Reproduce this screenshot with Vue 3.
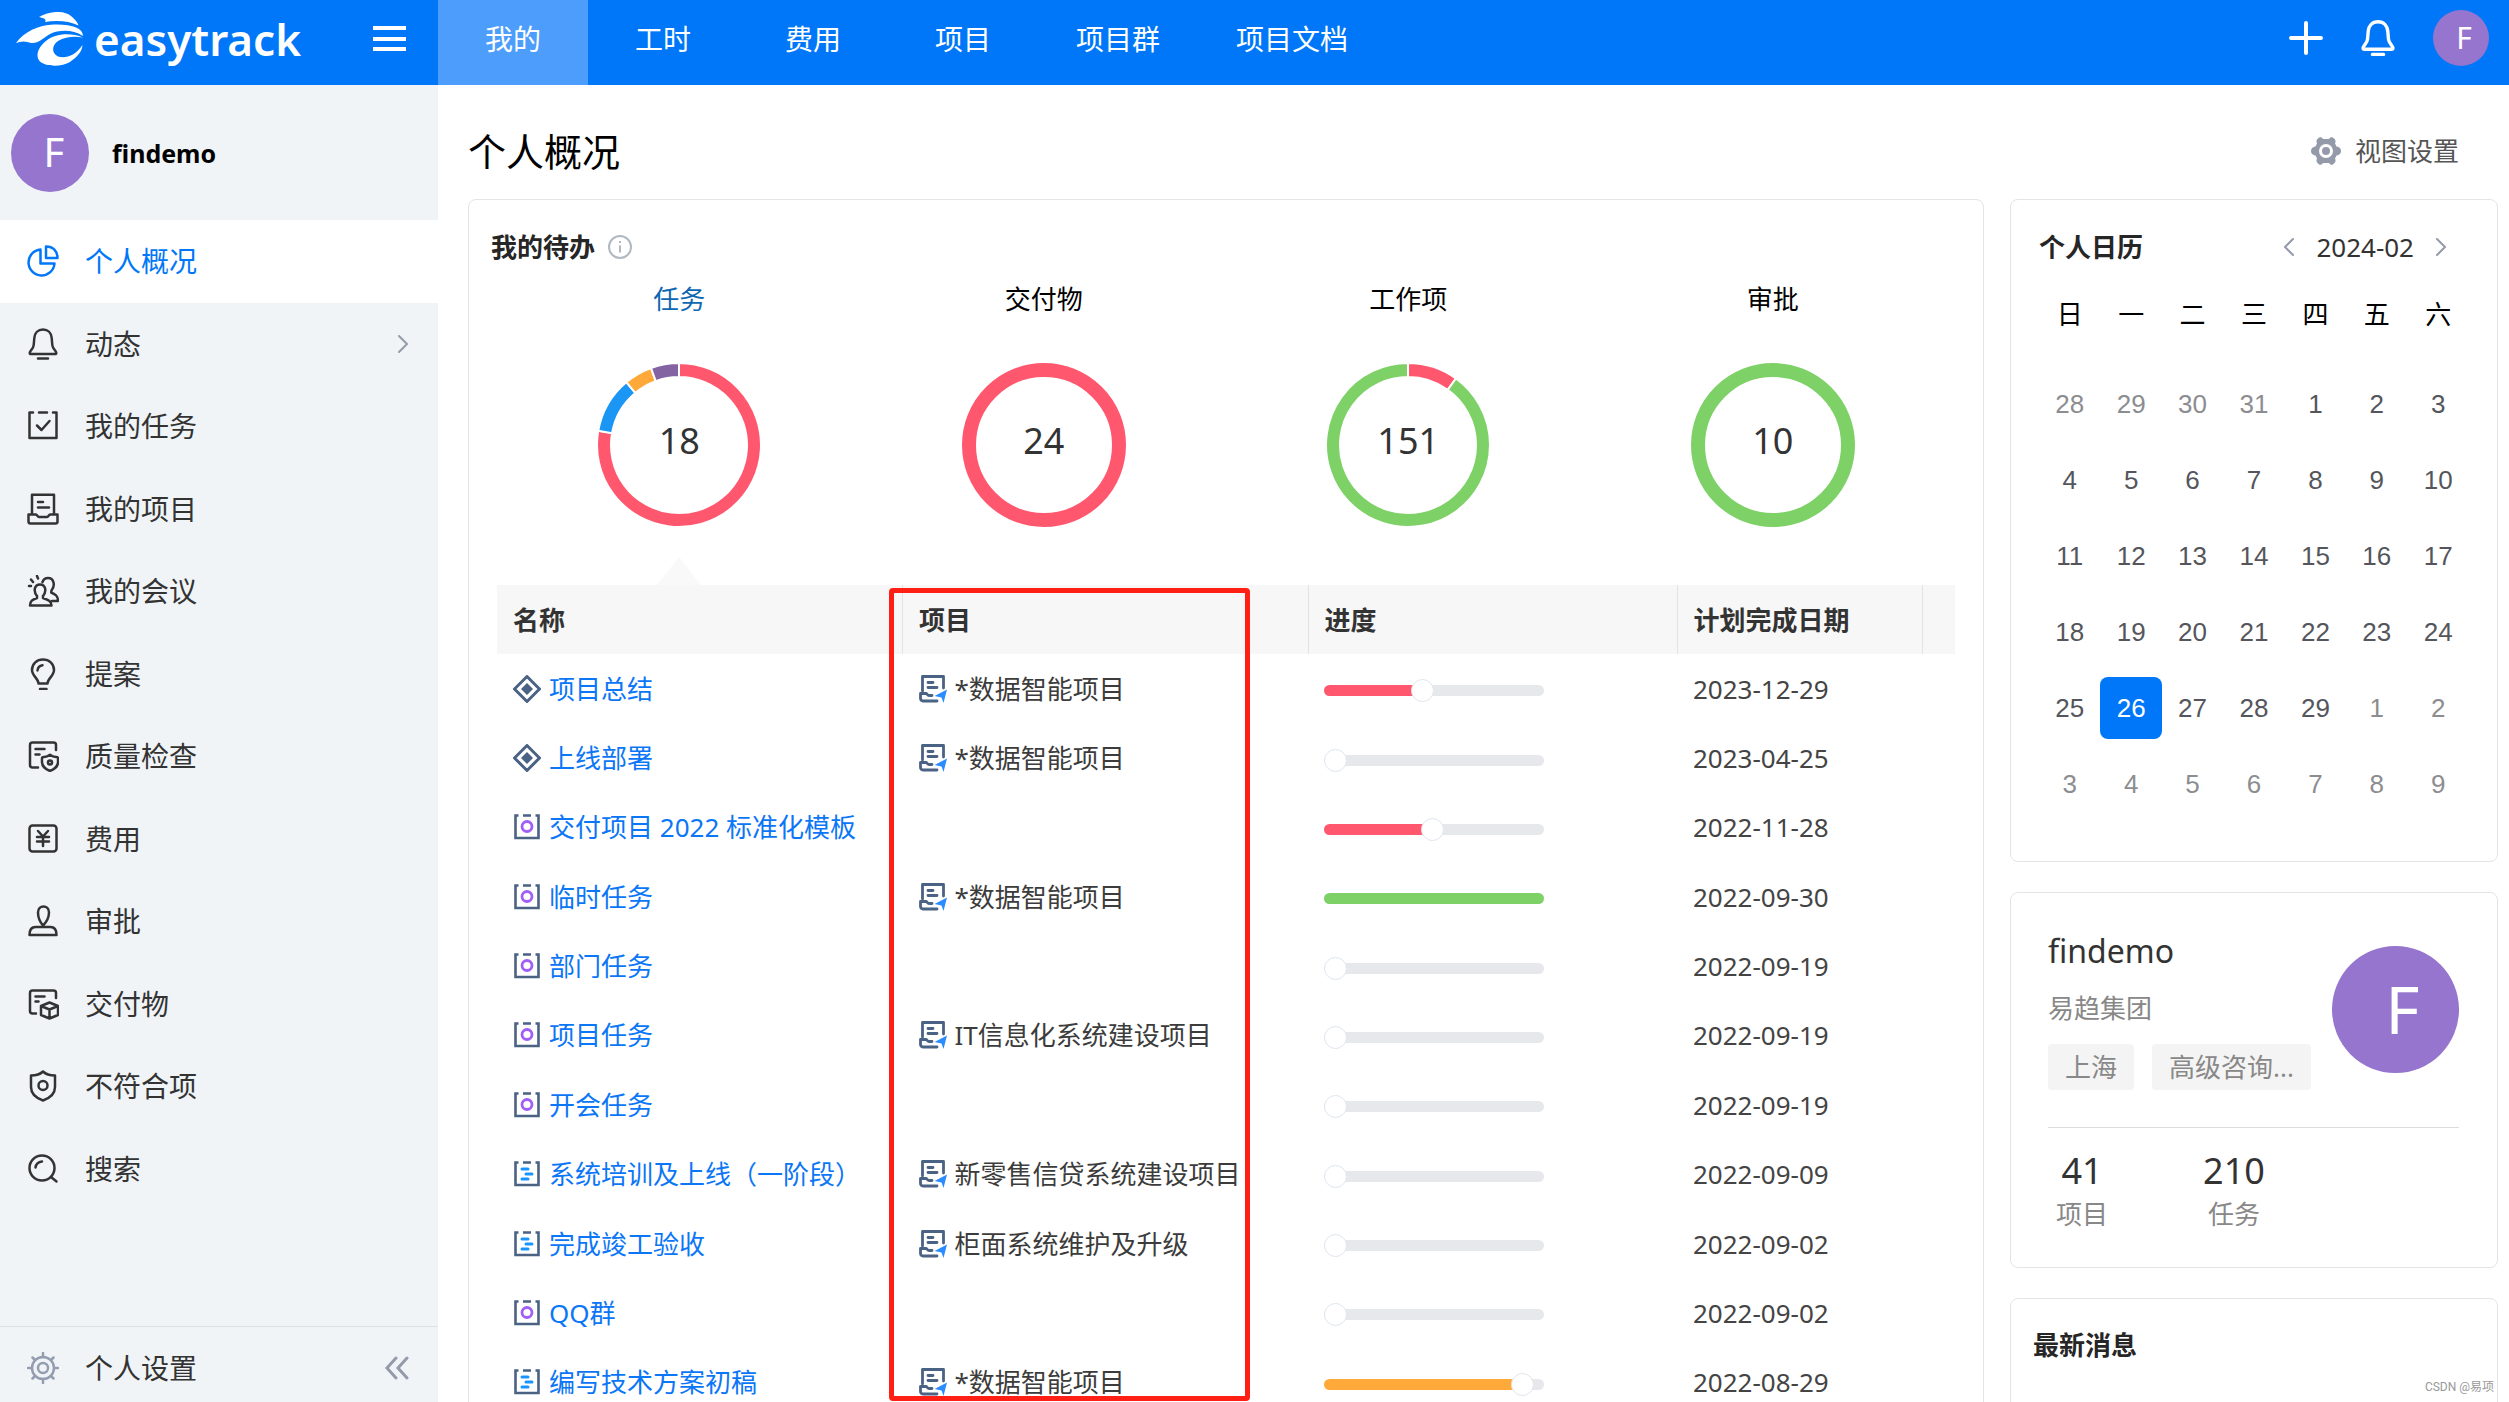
<script setup>
import { ref } from 'vue'

const tabs = ['我的', '工时', '费用', '项目', '项目群', '项目文档']

const menu = [
  { icon: 'pie', label: '个人概况', active: true },
  { icon: 'bell', label: '动态', more: true },
  { icon: 'task', label: '我的任务' },
  { icon: 'project', label: '我的项目' },
  { icon: 'meeting', label: '我的会议' },
  { icon: 'bulb', label: '提案' },
  { icon: 'quality', label: '质量检查' },
  { icon: 'yen', label: '费用' },
  { icon: 'stamp', label: '审批' },
  { icon: 'deliver', label: '交付物' },
  { icon: 'shield', label: '不符合项' },
  { icon: 'search', label: '搜索' },
]

const RED = '#ff586e'
const GREEN = '#7dd167'
const charts = [
  { label: '任务', total: 18, active: true, parts: [[14, RED], [2, '#1c96f5'], [1, '#ffa93a'], [1, '#8463a3']] },
  { label: '交付物', total: 24, parts: [[24, RED]] },
  { label: '工作项', total: 151, parts: [[15, RED], [136, GREEN]] },
  { label: '审批', total: 10, parts: [[10, GREEN]] },
]

function point(r, share) {
  const a = share * 2 * Math.PI
  return `${(82 + r * Math.sin(a)).toFixed(2)} ${(82 - r * Math.cos(a)).toFixed(2)}`
}
function slices(chart) {
  let from = 0
  return chart.parts.map(([n, color]) => {
    const to = from + n / chart.total
    const big = to - from > 0.5 ? 1 : 0
    const d = `M${point(82, from)}A82 82 0 ${big} 1 ${point(82, to)}L${point(68, to)}A68 68 0 ${big} 0 ${point(68, from)}Z`
    from = to
    return { d, color }
  })
}

const rows = ref([
  { icon: 'milestone', name: '项目总结', project: '*数据智能项目', value: 44, color: RED, date: '2023-12-29' },
  { icon: 'milestone', name: '上线部署', project: '*数据智能项目', value: 0, color: RED, date: '2023-04-25' },
  { icon: 'adhoc', name: '交付项目 2022 标准化模板', project: '', value: 49, color: RED, date: '2022-11-28' },
  { icon: 'adhoc', name: '临时任务', project: '*数据智能项目', value: 100, color: GREEN, date: '2022-09-30' },
  { icon: 'adhoc', name: '部门任务', project: '', value: 0, color: RED, date: '2022-09-19' },
  { icon: 'adhoc', name: '项目任务', project: 'IT信息化系统建设项目', value: 0, color: RED, date: '2022-09-19' },
  { icon: 'adhoc', name: '开会任务', project: '', value: 0, color: RED, date: '2022-09-19' },
  { icon: 'plan', name: '系统培训及上线（一阶段）', project: '新零售信贷系统建设项目', value: 0, color: RED, date: '2022-09-09' },
  { icon: 'plan', name: '完成竣工验收', project: '柜面系统维护及升级', value: 0, color: RED, date: '2022-09-02' },
  { icon: 'adhoc', name: 'QQ群', project: '', value: 0, color: RED, date: '2022-09-02' },
  { icon: 'plan', name: '编写技术方案初稿', project: '*数据智能项目', value: 95, color: '#ffa93a', date: '2022-08-29' },
])

const weekdays = ['日', '一', '二', '三', '四', '五', '六']
const first = new Date(2024, 0, 28)
const weeks = Array.from({ length: 6 }, (_, w) =>
  Array.from({ length: 7 }, (_, d) => {
    const day = new Date(first.getFullYear(), first.getMonth(), first.getDate() + w * 7 + d)
    const inMonth = day.getMonth() === 1
    return { n: day.getDate(), muted: !inMonth, today: inMonth && day.getDate() === 26 }
  })
)
</script>

<template>
  <div class="app">
    <svg class="sprite" aria-hidden="true">
      <symbol id="i-pie" viewBox="0 0 32 32"><path d="M13.500 4.500V18.500H27.500A13 13 0 1 1 13.500 4.500Z" /><path d="M19 1.500V13H30.500C30.500 6 26 1.500 19 1.500Z" /></symbol>
      <symbol id="i-bell" viewBox="0 0 32 32"><path d="M16 1.500c-5 0-8.300 3.500-8.700 8.500l-.6 7c-.3 3.500-3 5-3.900 7.500-.3 1 .1 1.500 1.200 1.500h24c1.100 0 1.500-.5 1.200-1.500-.9-2.500-3.600-4-3.900-7.500l-.6-7c-.4-5-3.700-8.500-8.700-8.500ZM11 30.600h10" /></symbol>
      <symbol id="i-task" viewBox="0 0 32 32"><path d="M6 2.500H2.500V28H29.500V2.500H26M12 2.500h8M10 15.500l4.500 4.500 8-9" /></symbol>
      <symbol id="i-project" viewBox="0 0 32 32"><path d="M5 20V1.800h22V20M11 9h5M11 14.500h11M1.500 21.500h7.500c1 0 1.500 2.500 3 2.500h8c1.500 0 2-2.500 3-2.500h7.500v7c0 1-.8 2-2 2h-25c-1.200 0-2-1-2-2Z" /></symbol>
      <symbol id="i-meeting" viewBox="0 0 32 32"><path d="M3 30.500c0-4.500 2.500-6 7-7.500v-2c-4-5-2.500-11.500 3-11.500s7 6.500 3 11.500v2c6 2 8.500 3.500 8.500 7.500ZM15.500 7c1-3 3-4 5.500-4 6 0 7.500 7.500 3.500 12.500l-.3 2c5 2 6.800 4 6.800 8.500h-6M2 11h2M4 4.500 6 7M10 1l1 2.500" /></symbol>
      <symbol id="i-bulb" viewBox="0 0 32 32"><path d="M11.500 25.500c0-5-6.500-7.500-6.500-13.500C5 5.500 10 1.500 16 1.500s11 4 11 10.500c0 6-6.500 8.500-6.500 13.500ZM13 31h6.500M10.500 12.500c.3-3 2-4.800 5-5.300" /></symbol>
      <symbol id="i-quality" viewBox="0 0 32 32"><path d="M29 10V5c0-1.500-1-2.500-2.500-2.500h-21C4 2.500 3 3.500 3 5v20c0 1.500 1 2.500 2.500 2.500H11M8.500 9h9M8.500 14.500h4M17 17c2.500 0 4.500-1 6-2.200 1.500 1.200 3.500 2.200 6 2.200 2.500 0 2 1 2 5 0 5-3.500 7-8 9-4.500-2-8-4-8-9 0-4-.5-5 2-5Z" /><circle cx="23" cy="22.500" r="2" /></symbol>
      <symbol id="i-yen" viewBox="0 0 32 32"><rect x="2.500" y="2.500" width="27" height="26" rx="3" /><path d="M11 8l5 5.500L21 8M16 13.500V23M10 14h12M10 18.500h12" /></symbol>
      <symbol id="i-stamp" viewBox="0 0 32 32"><path d="M16 20.500C13 17 11 12 11 7.500c0-8 11-8 11 0 0 4.500-2.500 9.500-6 13ZM2.500 30h27c0-5-1.500-8-6-8h-15c-4.500 0-6 3-6 8Z" /></symbol>
      <symbol id="i-deliver" viewBox="0 0 32 32"><path d="M29 10V5c0-1.500-1-2.500-2.500-2.500h-21C4 2.500 3 3.500 3 5v18c0 1.500 1 2.500 2.500 2.500H9M8.500 8.500h9M8.500 13.500h3M14 18l8.500-3.500L31 18v9l-8.500 3.500L14 27ZM14 18l8.500 3.500L31 18M22.500 21.500v9" /></symbol>
      <symbol id="i-shield" viewBox="0 0 32 32"><path d="M4 5.500c5 0 9-1 12-4 3 3 7 4 12 4V17c0 7-5 11-12 13.500C9 28 4 24 4 17Z" /><circle cx="16" cy="15.500" r="4.500" /></symbol>
      <symbol id="i-search" viewBox="0 0 32 32"><circle cx="15" cy="15" r="12.500" /><path d="M24 24l5.500 4.500M8.500 14.500c.5-3.500 2.500-5.500 6.500-6" /></symbol>
      <symbol id="i-cog" viewBox="0 0 32 32"><circle cx="16" cy="16" r="11" /><circle cx="16" cy="16" r="5" /><path d="M16 1v4M16 27v4M1 16h4M27 16h4M5.500 5.500l2.500 2.500M24 24l2.500 2.500M26.500 5.500 24 8M8 24l-2.500 2.500" /></symbol>
      <symbol id="i-milestone" viewBox="0 0 28 28"><path d="M14 1.500 26.500 14 14 26.500 1.500 14Z" fill="none" stroke="#4a6283" stroke-width="3" stroke-linejoin="round" /><path d="M14 8l6 6-6 6-6-6Z" fill="#4a6283" /></symbol>
      <symbol id="i-adhoc" viewBox="0 0 28 28"><path d="M5.500 2.500H2.500V25H25.500V2.500H22.500M10 2.500h8" fill="none" stroke="#4a6283" stroke-width="2.600" /><circle cx="14" cy="13.500" r="5" fill="none" stroke="#a060f5" stroke-width="2.800" /></symbol>
      <symbol id="i-plan" viewBox="0 0 28 28"><path d="M5.500 2.500H2.500V25H25.500V2.500H22.500M10 2.500h8" fill="none" stroke="#4a6283" stroke-width="2.600" /><path d="M9 9h6M13 14h6M9 19h6" fill="none" stroke="#1a95ff" stroke-width="3" stroke-linecap="round" /></symbol>
      <symbol id="i-doc" viewBox="0 0 28 28"><path d="M3.500 16V1.500h21V13M9 7.500h5M9 12.500h9M18 26H4c-1.500 0-2.500-1-2.500-2.500V18.500H7c1 0 1.500 2 3 2h3" fill="none" stroke="#4a6283" stroke-width="2.800" stroke-linecap="round" stroke-linejoin="round" /><path d="M28 14.500 15.500 21l7 1.500L24.500 28Z" fill="#2b8cff" /></symbol>
    </svg>

    <header class="topbar">
      <div class="brand">
        <a class="logo" href="#">
          <svg class="logo-mark" viewBox="0 0 68 54" aria-hidden="true">
            <path d="M23 5C33-1 48-2 55 4c4 3 7 7 7.500 9.500C53 9 41 8 29 10c2-3-2-4-6-5Z" />
            <path d="M0 31C8 20 22 13 38 12.500 56 12 67 16 67 24 56 17 43 18 34 22 27 26 22 32 15 31 10 29 5 29 0 31Z" />
            <path d="M67 25.500C54 20 38 22 30 29 20 37 20 46 24 49.500 30 55 46 55 54 50 61 45 66 40 66.500 33 60 43 50 47 42 44.500 35 41 36 33 42 29 50 24 60 24 67 25.500Z" />
          </svg>
          <span>easytrack</span>
        </a>
        <button class="burger" aria-label="菜单"><i></i><i></i><i></i></button>
      </div>
      <nav class="tabs">
        <a v-for="(t, i) in tabs" :key="t" href="#" :class="{ active: i === 0 }">{{ t }}</a>
      </nav>
      <div class="tools">
        <button aria-label="新建"><svg class="plus" viewBox="0 0 34 34"><path d="M17 2v30M2 17h30" /></svg></button>
        <button aria-label="通知"><svg class="alarm"><use href="#i-bell" /></svg></button>
        <button class="avatar small">F</button>
      </div>
    </header>

    <div class="body">
      <aside class="sidebar">
        <div class="user"><span class="avatar medium">F</span><strong>findemo</strong></div>
        <nav class="menu">
          <a v-for="m in menu" :key="m.label" href="#" :class="{ active: m.active }">
            <svg class="ico"><use :href="'#i-' + m.icon" /></svg>
            <span>{{ m.label }}</span>
            <svg v-if="m.more" class="chev" viewBox="0 0 12 20"><path d="M2 2l8 8-8 8" /></svg>
          </a>
        </nav>
        <div class="foot">
          <a href="#"><svg class="ico grey"><use href="#i-cog" /></svg><span>个人设置</span></a>
          <button aria-label="收起"><svg class="collapse" viewBox="0 0 24 24"><path d="M11 2 2 12l9 10M22 2l-9 10 9 10" /></svg></button>
        </div>
      </aside>

      <main class="main">
        <div class="head">
          <h1>个人概况</h1>
          <button class="view">
            <svg class="gear" viewBox="0 0 30 28"><path d="M7 1.500c1.500-2 4-1.500 5 .5h6c1-2 3.500-2.500 5-.5 1.500 1 2 3 1 5l1.500 3c3 .3 4.500 2 4.500 4.500s-1.500 4.200-4.500 4.500l-1.500 3c1 2 .5 4-1 5-1.500 2-4 1.500-5-.5h-6c-1 2-3.500 2.500-5 .5-1.500-1-2-3-1-5l-1.500-3C1.500 18.200 0 16.500 0 14s1.500-4.200 4.500-4.500l1.500-3c-1-2-.5-4 1-5Z" /><circle cx="15" cy="14" r="5.500" /></svg>
            <span>视图设置</span>
          </button>
        </div>

        <div class="columns">
          <section class="card todo">
            <h2>我的待办
              <svg class="info" viewBox="0 0 24 24"><circle cx="12" cy="12" r="11" /><path d="M12 10.500v7M12 6v2" /></svg>
            </h2>
            <div class="charts">
              <a v-for="c in charts" :key="c.label" href="#" class="chart" :class="{ active: c.active }">
                <span class="chart-label">{{ c.label }}</span>
                <span class="donut">
                  <svg viewBox="0 0 164 164">
                    <circle v-if="c.parts.length === 1" cx="82" cy="82" r="75" fill="none" :stroke="c.parts[0][1]" stroke-width="14" />
                    <template v-else>
                      <path v-for="s in slices(c)" :key="s.d" :d="s.d" :fill="s.color" stroke="#fff" stroke-width="2" />
                    </template>
                  </svg>
                  <b>{{ c.total }}</b>
                </span>
              </a>
            </div>

            <div class="grid-wrap">
              <table class="tasks">
                <colgroup><col /><col /><col class="c-progress" /><col class="c-date" /><col class="c-end" /></colgroup>
                <thead>
                  <tr><th>名称</th><th>项目</th><th>进度</th><th>计划完成日期</th><th></th></tr>
                </thead>
                <tbody>
                  <tr v-for="r in rows" :key="r.name">
                    <td><a href="#" class="cell link"><svg><use :href="'#i-' + r.icon" /></svg><span>{{ r.name }}</span></a></td>
                    <td><span v-if="r.project" class="cell"><svg><use href="#i-doc" /></svg><span>{{ r.project }}</span></span></td>
                    <td>
                      <input
                        v-model="r.value" type="range" min="0" max="100" :aria-label="r.name + ' 进度'"
                        :class="{ done: r.value >= 100 }"
                        :style="{ '--fill': r.value + '%', '--tone': r.color }"
                      />
                    </td>
                    <td class="date">{{ r.date }}</td>
                    <td></td>
                  </tr>
                </tbody>
              </table>
              <div class="marker"></div>
            </div>
          </section>

          <div class="side">
            <section class="card calendar">
              <div class="cal-head">
                <h2>个人日历</h2>
                <div class="month">
                  <button aria-label="上个月"><svg class="chev" viewBox="0 0 12 20"><path d="M10 2l-8 8 8 8" /></svg></button>
                  <span>2024-02</span>
                  <button aria-label="下个月"><svg class="chev" viewBox="0 0 12 20"><path d="M2 2l8 8-8 8" /></svg></button>
                </div>
              </div>
              <table>
                <thead><tr><th v-for="d in weekdays" :key="d">{{ d }}</th></tr></thead>
                <tbody>
                  <tr v-for="(w, i) in weeks" :key="i">
                    <td v-for="(d, j) in w" :key="j"><span :class="{ muted: d.muted, today: d.today }">{{ d.n }}</span></td>
                  </tr>
                </tbody>
              </table>
            </section>

            <section class="card profile">
              <div class="who">
                <div>
                  <div class="name">findemo</div>
                  <div class="org">易趋集团</div>
                  <div class="chips"><span>上海</span><span>高级咨询...</span></div>
                </div>
                <span class="avatar large">F</span>
              </div>
              <div class="stats">
                <div><b>41</b><span>项目</span></div>
                <div><b>210</b><span>任务</span></div>
              </div>
            </section>

            <section class="card news"><h2>最新消息</h2></section>
          </div>
        </div>
      </main>
    </div>
    <div class="watermark">CSDN @易项</div>
  </div>
</template>

<style>
body { margin: 0; overflow: hidden; }
</style>

<style scoped>
.app {
  position: relative;
  display: flex;
  flex-direction: column;
  height: 100vh;
  overflow: hidden;
  background: #fff;
  color: #333;
  font: 26px/36px "Noto Sans", "Noto Sans CJK SC", sans-serif;
}
.app * { box-sizing: border-box; }
.sprite { position: absolute; width: 0; height: 0; }
a { color: inherit; text-decoration: none; }
button { display: flex; align-items: center; justify-content: center; padding: 0; border: 0; background: none; color: inherit; font: inherit; }
h1, h2 { margin: 0; }
h2 { font-size: 26px; line-height: 36px; font-weight: 700; color: #262626; }

.topbar { display: flex; flex: none; height: 85px; background: #0077f8; color: #fff; }
.brand { display: flex; align-items: center; justify-content: space-between; width: 438px; padding: 0 32px 8px 16px; }
.logo { display: flex; align-items: center; gap: 10px; font-size: 44px; line-height: 60px; font-weight: 600; }
.logo-mark { width: 68px; height: 54px; fill: #fff; }
.burger { flex-direction: column; justify-content: space-between; width: 33px; height: 25px; }
.burger i { width: 33px; height: 4px; background: #fff; }
.tabs { display: flex; flex: 1; font-size: 28px; }
.tabs a { min-width: 150px; padding: 0 38px 7px; line-height: 78px; text-align: center; }
.tabs a.active { background: #4d9efc; }
.tools { display: flex; align-items: center; gap: 37px; padding: 0 20px 9px 0; }
.plus { width: 34px; height: 34px; fill: none; stroke: #fff; stroke-width: 4; stroke-linecap: round; }
.alarm { width: 36px; height: 38px; fill: none; stroke: #fff; stroke-width: 3; stroke-linejoin: round; stroke-linecap: round; }

.avatar { display: flex; flex: none; align-items: center; justify-content: center; border-radius: 50%; background: #9575cd; color: #fff; }
.avatar.small { width: 56px; height: 56px; padding-left: 6px; font-size: 30px; }
.avatar.medium { width: 78px; height: 78px; padding: 0 0 2px 8px; font-size: 40px; }
.avatar.large { width: 127px; height: 127px; padding: 0 0 4px 14px; font-size: 66px; }

.body { display: flex; flex: 1; min-height: 0; }
.sidebar { display: flex; flex: none; flex-direction: column; width: 438px; background: #f0f4f7; font-size: 28px; }
.user { display: flex; align-items: center; gap: 23px; height: 135px; padding: 0 11px; color: #000; }
.user strong { font-size: 25px; }
.menu { display: grid; grid-auto-rows: 1fr; flex: none; height: 990px; }
.menu a { display: flex; align-items: center; padding: 0 29px 0 27px; }
.menu a.active { background: #fff; color: #0077f8; }
.menu span, .foot span { flex: 1; }
.ico { width: 32px; height: 32px; margin-right: 26px; overflow: visible; fill: none; stroke: currentColor; stroke-width: 2.5; stroke-linecap: round; stroke-linejoin: round; }
.ico.grey { color: #949eb0; }
.chev { width: 12px; height: 20px; fill: none; stroke: #949aaa; stroke-width: 2; stroke-linecap: round; }
.foot { display: flex; align-items: center; justify-content: space-between; height: 76px; margin-top: auto; padding: 7px 29px 0 27px; border-top: 1px solid #dbe1e6; }
.foot a { display: flex; align-items: center; }
.collapse { width: 24px; height: 24px; fill: none; stroke: #949aaa; stroke-width: 3; stroke-linecap: round; }

.main { flex: 1; min-width: 0; padding: 0 11px 0 30px; overflow: hidden; }
.head { display: flex; align-items: center; justify-content: space-between; height: 114px; padding: 17px 39px 0 0; }
h1 { font-size: 38px; line-height: 52px; font-weight: 400; color: #000; }
.view { gap: 14px; color: #555; }
.gear { width: 30px; height: 28px; fill: #949aaa; }
.gear circle { fill: #949aaa; stroke: #fff; stroke-width: 3; }
.columns { display: flex; gap: 26px; }
.card { border: 1px solid #e3e4e6; border-radius: 8px; background: #fff; }

.todo { flex: 1; min-width: 0; padding: 29px 28px 0; }
.todo h2 { display: flex; align-items: center; gap: 13px; margin-left: -6px; }
.info { width: 24px; height: 24px; fill: none; stroke: #b0b8c1; stroke-width: 2; }
.charts { display: grid; grid-template-columns: repeat(4, 1fr); margin-top: 16px; }
.chart { position: relative; display: flex; flex-direction: column; align-items: center; height: 304px; color: #000; }
.chart.active { color: #0f67b1; }
.chart.active::after { content: ""; position: absolute; bottom: 0; border: 22px solid transparent; border-top: 0; border-bottom: 28px solid #f9f9f9; }
.donut { position: relative; display: grid; place-items: center; width: 164px; height: 164px; margin-top: 46px; }
.donut svg { grid-area: 1 / 1; width: 164px; height: 164px; }
.donut b { grid-area: 1 / 1; padding-bottom: 8px; font-size: 36px; line-height: 48px; font-weight: 400; color: #333; }

.grid-wrap { position: relative; }
.tasks { width: 100%; table-layout: fixed; border-collapse: collapse; }
.tasks tbody { height: 763px; }
.c-progress { width: 369px; }
.c-date { width: 245px; }
.c-end { width: 33px; }
.tasks th, .tasks td { height: 69px; padding: 0 0 0 16px; text-align: left; white-space: nowrap; }
.tasks th { background: #f7f7f7; font-weight: 700; }
.tasks th + th { border-left: 1px solid #e3e3e3; }
.date { color: #444; }
.cell { display: flex; align-items: center; gap: 8px; color: #3c3c3c; }
.cell svg { flex: none; width: 28px; height: 28px; }
.cell.link { color: #0b76f6; }
.marker { position: absolute; top: 3px; left: 392px; width: 361px; height: 813px; border: 5px solid #ff1f14; border-radius: 4px; pointer-events: none; }

input[type="range"] {
  display: block;
  appearance: none;
  width: 220px;
  height: 11px;
  margin: 4px 0 0;
  border-radius: 6px;
  background: linear-gradient(var(--tone), var(--tone)) 0 0 / var(--fill) 100% no-repeat #e7e8ec;
}
input[type="range"]::-webkit-slider-thumb { appearance: none; width: 23px; height: 23px; border: 1px solid #dfe6ee; border-radius: 50%; background: #fff; }
input.done::-webkit-slider-thumb { visibility: hidden; }

.side { display: flex; flex: none; flex-direction: column; gap: 30px; width: 488px; }
.calendar { height: 663px; padding: 29px 28px 0; }
.cal-head { display: flex; justify-content: space-between; padding-right: 22px; }
.month { display: flex; align-items: center; gap: 21px; }
.calendar table { width: 100%; table-layout: fixed; border-collapse: collapse; text-align: center; }
.calendar th { height: 101px; padding: 0 0 4px; font-weight: 400; color: #000; }
.calendar td { height: 76px; padding: 0; font-family: "Liberation Sans", sans-serif; color: #54565c; }
.calendar td span { display: block; line-height: 62px; border-radius: 8px; }
.calendar td .muted { color: #8c8d90; }
.calendar td .today { background: #0077f8; color: #fff; }

.profile { height: 376px; padding: 33px 38px 0 37px; }
.who { display: flex; justify-content: space-between; height: 202px; border-bottom: 1px solid #dcdcdc; }
.who .avatar { margin-top: 20px; }
.name { font-size: 32px; line-height: 50px; }
.org { margin-top: 14px; color: #888; }
.chips { display: flex; gap: 18px; margin-top: 18px; color: #888; }
.chips span { padding: 0 17px; line-height: 46px; border-radius: 4px; background: #f4f4f4; }
.stats { display: grid; grid-template-columns: 68px 68px; gap: 84px; padding-top: 18px; text-align: center; }
.stats b { display: block; font-size: 36px; line-height: 50px; font-weight: 400; }
.stats span { color: #888; }
.news { height: 140px; padding: 28px 22px; }

.watermark { position: absolute; right: 15px; bottom: 6px; font: 12px/18px Roboto, "Noto Sans CJK SC", sans-serif; color: #999; }
</style>
